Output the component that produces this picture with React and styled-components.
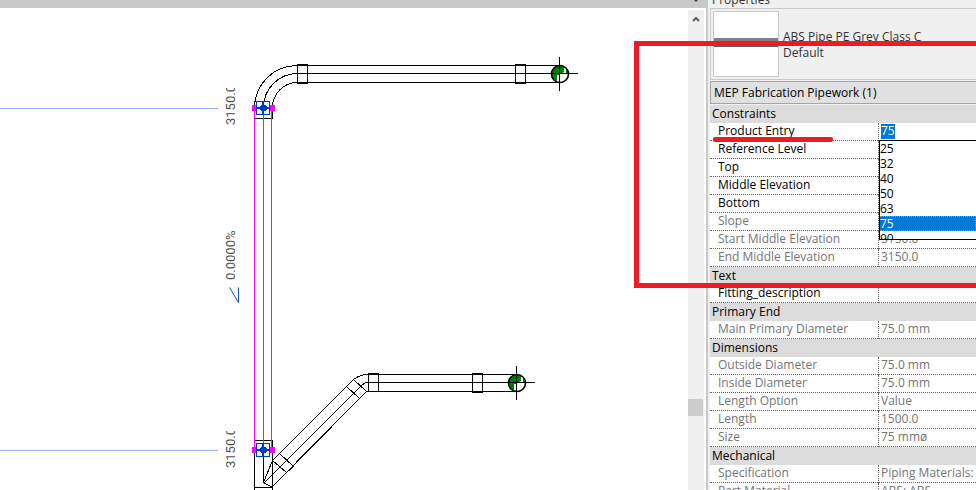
import React from 'react';
import styled, { createGlobalStyle } from 'styled-components';

const GlobalStyle = createGlobalStyle`
  *, *::before, *::after { box-sizing: border-box; }
  body { margin: 0; font-family: "Open Sans", "Noto Sans", sans-serif; font-size: 12px; color: #000; }
`;

const Workspace = styled.div`
  display: flex;
  height: 100vh;
  overflow: hidden;
  background: #fff;
`;

const View = styled.main`
  flex: 1;
  min-width: 0;
  display: flex;
  flex-direction: column;
`;

const ViewBar = styled.div`
  flex: 0 0 8px;
  display: flex;
  justify-content: flex-end;
  padding-right: 6px;
  background: #c9c9c9;
  overflow: hidden;
  svg { display: block; }
`;

const ViewBody = styled.div`
  flex: 1;
  min-height: 0;
  display: flex;
`;

const Drawing = styled.svg`
  flex: 1;
  min-width: 0;
  display: block;
  height: 100%;
  font-family: Roboto, sans-serif;
  font-size: 13px;
`;

const ScrollTrack = styled.div`
  flex: 0 0 16px;
  display: flex;
  flex-direction: column;
  margin: 2px 2px 0 0;
  background: #f0f0f0;
`;

const ScrollButton = styled.button`
  height: 17px;
  padding: 0;
  border: 0;
  background: transparent;
  svg { display: block; margin: 0 auto; }
`;

const ScrollThumb = styled.div`
  height: 17px;
  width: 15px;
  margin-top: 372px;
  background: #cdcdcd;
`;

const Panel = styled.aside`
  position: relative;
  flex: 0 0 270px;
  padding-left: 2px;
  border-left: 2px solid #c9c9c9;
  background: #f0f0f0;
`;

const PanelTitle = styled.h2`
  display: flex;
  align-items: flex-end;
  height: 8px;
  margin: 0;
  padding-left: 2px;
  overflow: hidden;
  font-size: 12px;
  font-weight: 400;
  line-height: 16px;
  color: #333;
`;

const TypeSelector = styled.div`
  display: flex;
  align-items: center;
  gap: 4px;
  height: 72px;
  padding: 2px;
  border: 1px solid #c9c9c9;
  border-right: 0;
  color: #333;
  line-height: 16px;
`;

const Thumbnail = styled.div`
  flex: 0 0 66px;
  height: 66px;
  padding-top: 26px;
  border: 1px solid #c9c9c9;
  background: #fff;
`;

const PipeSwatch = styled.div`
  width: 100%;
  height: 9px;
  background: #808080;
  border-bottom: 1px solid #606060;
`;

const TypeText = styled.div`
  padding-top: 2px;
  white-space: nowrap;
`;

const Filter = styled.select`
  appearance: none;
  display: block;
  width: 100%;
  height: 23px;
  margin: 1px 0;
  padding: 0 3px;
  border: 1px solid #a5a5a5;
  border-right: 0;
  border-radius: 0;
  background: #e1e1e1;
  color: #000;
  font: inherit;
`;

const Grid = styled.table`
  width: 100%;
  table-layout: fixed;
  border-collapse: separate;
  border-spacing: 0;
  background: #fff;
  line-height: 16px;
  white-space: nowrap;
  th, td { height: 18px; text-align: left; font-weight: 400; }
`;

const NameColumn = styled.col`
  width: 168px;
`;

const GroupCell = styled.th`
  padding: 0 2px;
  background: #dcdcdc;
`;

const NameCell = styled.th`
  padding: 0 0 1px 8px;
  border-bottom: 1px dotted #606060;
  color: ${(p) => (p.$muted ? '#757575' : '#000')};
`;

const ValueCell = styled.td`
  position: relative;
  padding: 0 0 1px 2px;
  border-left: 1px dotted #606060;
  border-bottom: 1px dotted #606060;
  color: #757575;
`;

const EntryInput = styled.input`
  display: block;
  width: 14px;
  height: 15px;
  padding: 0;
  border: 0;
  background: #0078d7;
  color: #fff;
  font: inherit;
`;

const Options = styled.ul`
  position: absolute;
  z-index: 1;
  top: 17px;
  left: 0;
  right: 0;
  height: 100px;
  margin: 0;
  padding: 0;
  overflow: hidden;
  list-style: none;
  border: 1px solid #000;
  border-right: 0;
  background: #fff;
  color: #000;
`;

const Option = styled.li`
  height: 15px;
  line-height: 13px;
  border: 1px dotted transparent;
  border-left: 0;
  ${(p) => p.$active && 'background: #0078d7; border-color: #f08020; color: #fff;'}
`;

const RedFrame = styled.div`
  position: absolute;
  z-index: 2;
  top: 41px;
  left: -74px;
  right: -8px;
  height: 247px;
  border: 5px solid #ed1c24;
  pointer-events: none;
`;

const RedUnderline = styled.div`
  position: absolute;
  z-index: 2;
  top: 137px;
  left: 5px;
  width: 120px;
  height: 5px;
  border-radius: 2px;
  background: #ed1c24;
`;

const groups = [
  { name: 'Constraints', rows: [
    { name: 'Product Entry', options: ['25', '32', '40', '50', '63', '75', '90'], value: '75' },
    { name: 'Reference Level' },
    { name: 'Top' },
    { name: 'Middle Elevation' },
    { name: 'Bottom' },
    { name: 'Slope', muted: true },
    { name: 'Start Middle Elevation', value: '3150.0', muted: true },
    { name: 'End Middle Elevation', value: '3150.0', muted: true },
  ] },
  { name: 'Text', rows: [{ name: 'Fitting_description' }] },
  { name: 'Primary End', rows: [{ name: 'Main Primary Diameter', value: '75.0 mm', muted: true }] },
  { name: 'Dimensions', rows: [
    { name: 'Outside Diameter', value: '75.0 mm', muted: true },
    { name: 'Inside Diameter', value: '75.0 mm', muted: true },
    { name: 'Length Option', value: 'Value', muted: true },
    { name: 'Length', value: '1500.0', muted: true },
    { name: 'Size', value: '75 mmø', muted: true },
  ] },
  { name: 'Mechanical', rows: [
    { name: 'Specification', value: 'Piping Materials: P', muted: true },
    { name: 'Part Material', value: 'ABS: ABS', muted: true },
  ] },
];

function PropertyRow({ row }) {
  return (
    <tr>
      <NameCell scope="row" $muted={row.muted}>
        {row.options ? <label htmlFor="entry">{row.name}</label> : row.name}
      </NameCell>
      <ValueCell>
        {row.options ? (
          <>
            <EntryInput id="entry" defaultValue={row.value} />
            <Options role="listbox" aria-label={row.name}>
              {row.options.map((o) => (
                <Option key={o} role="option" aria-selected={o === row.value} $active={o === row.value}>{o}</Option>
              ))}
            </Options>
          </>
        ) : row.value}
      </ValueCell>
    </tr>
  );
}

function Riser({ x, y }) {
  return (
    <g transform={`translate(${x} ${y})`}>
      <circle r="8.5" fill="#fff" />
      <path d="M-8 0A8 8 0 0 1 4-7V-2L1 0H0V1H-3V7Q-8 5-8 0Z" fill="#008000" />
      <path d="M6-6Q8-4 8 0H6Z" fill="#008000" />
      <circle r="8.5" fill="none" stroke="#000" strokeWidth="1.6" />
      <path d="M-0.5-17V17M-9-0.5H18" stroke="#000" shapeRendering="crispEdges" />
    </g>
  );
}

function Connector({ y }) {
  return (
    <g transform={`translate(263 ${y})`} shapeRendering="crispEdges">
      <rect x="-6.5" y="-6.5" width="13" height="13" fill="#e6f3ff" stroke="#003cc0" />
      <path d="M-6 0H7M0-6V7" stroke="#003cc0" strokeWidth="2" />
      <path d="M-3-2H-2V-3H3V-2H4V2H3V3H-2V2H-3Z" fill="#003cc0" />
      <path d="M-11-3H-7V3H-11ZM7-3H12V3H7Z" fill="#f0f" />
    </g>
  );
}

function PipePlan() {
  return (
    <Drawing viewBox="0 8 688 482" preserveAspectRatio="xMinYMin slice" role="img" aria-label="Pipework plan">
      <defs>
        <clipPath id="upperMask"><rect x="220" y="88" width="20" height="40" /></clipPath>
        <clipPath id="lowerMask"><rect x="220" y="431" width="20" height="40" /></clipPath>
      </defs>
      <g stroke="#8cb0f5" shapeRendering="crispEdges">
        <path d="M0 108.5H218M0 450.5H218" />
      </g>
      <g fill="none" stroke="#000" shapeRendering="crispEdges">
        <path d="M297 65.5H560M297 73.5H560M297 82.5H560M297.5 64.5H307.5V83.5H297.5ZM515.5 64.5H525.5V83.5H515.5Z" />
        <path d="M297 65.5A42.5 42.5 0 0 0 254.5 108V118.5H272.5V108A25 25 0 0 1 297 82.5M297 73.5A34 34 0 0 0 263.5 108" />
        <path d="M368 374.5H517M368 382.5H517M368 391.5H517M368.5 373.5H378.5V391.5H368.5ZM472.5 373.5H482.5V392.5H472.5Z" />
        <path d="M368 374.5Q360 374.5 353.5 379.5L346.5 386.5L359.5 398.5L366.5 391.5L353.5 379.5M368 382.5Q364 382.5 360.5 386.5M368 391.5H366.5" />
        <path d="M346.5 386.5L272.5 460.5M360.5 386.5L264.5 482.5M359.5 398.5L272.5 486.5M279.5 453.5L293.5 466.5L286.5 472.5L272.5 460.5Z" />
        <path d="M272.5 460.5L263.5 482.5L272.5 487.5M254.5 490V440.5H272.5V490M263.5 450V483M254 487.5H272" />
      </g>
      <path d="M254.5 108V451M263.5 108V451M271.5 108V451" stroke="#f0f" shapeRendering="crispEdges" />
      <Connector y={108} />
      <Connector y={450} />
      <Riser x={560} y={74} />
      <Riser x={517} y={383} />
      <g fill="#505050">
        <g clipPath="url(#upperMask)"><text transform="translate(235 125) rotate(-90)">3150.0</text></g>
        <g clipPath="url(#lowerMask)"><text transform="translate(235 468) rotate(-90)">3150.0</text></g>
        <text transform="translate(235 280) rotate(-90)">0.0000%</text>
      </g>
      <path d="M229.5 287.5L238.5 302.5V287.5" fill="none" stroke="#1450c8" />
    </Drawing>
  );
}

export default function App() {
  return (
    <Workspace>
      <GlobalStyle />
      <View>
        <ViewBar>
          <svg width="8" height="4" viewBox="0 0 8 4"><path d="M2 0H6L4 2Z" fill="#444" /></svg>
        </ViewBar>
        <ViewBody>
          <PipePlan />
          <ScrollTrack>
            <ScrollButton aria-label="Scroll up">
              <svg width="10" height="17" viewBox="0 0 10 17"><path d="M2 11L5 8L8 11" fill="none" stroke="#606060" strokeWidth="2" /></svg>
            </ScrollButton>
            <ScrollThumb />
          </ScrollTrack>
        </ViewBody>
      </View>
      <Panel>
        <PanelTitle>Properties</PanelTitle>
        <TypeSelector>
          <Thumbnail><PipeSwatch /></Thumbnail>
          <TypeText>ABS Pipe PE Grey Class C<br />Default</TypeText>
        </TypeSelector>
        <Filter aria-label="Instance filter" defaultValue="pipework">
          <option value="pipework">MEP Fabrication Pipework (1)</option>
        </Filter>
        <Grid>
          <colgroup><NameColumn /><col /></colgroup>
          {groups.map((g) => (
            <tbody key={g.name}>
              <tr><GroupCell colSpan={2} scope="rowgroup">{g.name}</GroupCell></tr>
              {g.rows.map((r) => <PropertyRow key={r.name} row={r} />)}
            </tbody>
          ))}
        </Grid>
        <RedFrame />
        <RedUnderline />
      </Panel>
    </Workspace>
  );
}
